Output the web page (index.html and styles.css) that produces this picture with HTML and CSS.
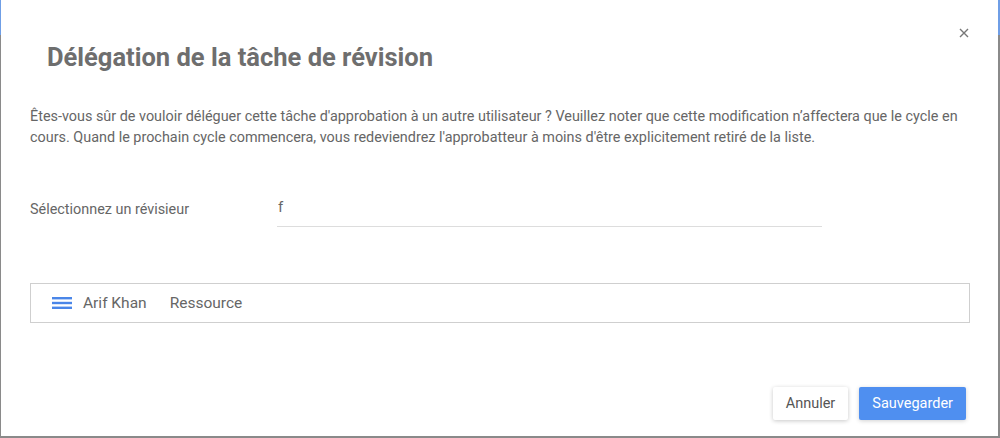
FILE: index.html
```html
<!DOCTYPE html>
<html lang="fr">
<head>
  <meta charset="UTF-8" />
  <title>Délégation de la tâche de révision</title>
  <link rel="stylesheet" href="styles.css">
</head>
<body>
  <div class="dialog">
    <div class="dialog-header">
      <h2 class="dialog-title">Délégation de la tâche de révision</h2>
      <button class="close-btn" aria-label="Fermer">
        <svg width="10" height="10" viewBox="0 0 10 10">
          <path d="M1 1 L9 9 M9 1 L1 9" stroke="#777" stroke-width="1.4" fill="none" />
        </svg>
      </button>
    </div>

    <div class="dialog-body">
      <p class="intro">
        Êtes-vous sûr de vouloir déléguer cette tâche d'approbation à un autre utilisateur ? Veuillez noter que cette modification n’affectera que le cycle en cours. Quand le prochain cycle commencera, vous redeviendrez l'approbatteur à moins d'être explicitement retiré de la liste.
      </p>

      <div class="field">
        <label class="field-label" for="reviewer">Sélectionnez un révisieur</label>
        <input class="field-input" id="reviewer" type="text" value="f" />
      </div>

      <div class="result-list">
        <div class="result-item">
          <svg class="drag-icon" width="20" height="12" viewBox="0 0 20 12">
            <rect x="0" y="0" width="20" height="2.4" fill="#4a86e8" />
            <rect x="0" y="4.8" width="20" height="2.4" fill="#4a86e8" />
            <rect x="0" y="9.6" width="20" height="2.4" fill="#4a86e8" />
          </svg>
          <span class="result-name">Arif Khan</span>
          <span class="result-type">Ressource</span>
        </div>
      </div>
    </div>

    <div class="dialog-footer">
      <button class="btn btn-cancel">Annuler</button>
      <button class="btn btn-save">Sauvegarder</button>
    </div>
  </div>
</body>
</html>
```

FILE: styles.css
```css
* {
  box-sizing: border-box;
}

body {
  margin: 0;
  font-family: Roboto, 'Liberation Sans', sans-serif;
  background: #fff;
  color: #666;
}

.dialog {
  width: 1000px;
  height: 438px;
  display: flex;
  flex-direction: column;
  border-style: solid;
  border-width: 0 2px 2px 1px;
  border-image: linear-gradient(to bottom, #6f9ee6 36px, #8a8a8a 36px) 1;
  background: #fff;
}

.dialog-header {
  display: flex;
  justify-content: space-between;
  align-items: flex-start;
  padding: 0 29px 0 46px;
}

.dialog-title {
  margin: 42px 0 0;
  font-size: 25.5px;
  line-height: 30px;
  font-weight: 700;
  color: #6e6e6e;
}

.close-btn {
  margin-top: 28px;
  padding: 0;
  border: none;
  background: none;
  cursor: pointer;
  line-height: 0;
}

.dialog-body {
  padding: 0 29px;
}

.intro {
  margin: 34px 0 0;
  font-size: 14.4px;
  line-height: 21px;
  color: #666;
}

.field {
  display: flex;
  align-items: center;
  margin-top: 43px;
}

.field-label {
  width: 247px;
  font-size: 14.4px;
  color: #666;
}

.field-input {
  width: 545px;
  height: 36px;
  padding: 0 1px 4px;
  border: none;
  border-bottom: 1px solid #ddd;
  font-family: inherit;
  font-size: 15px;
  color: #666;
  outline: none;
}

.result-list {
  margin-top: 56px;
  width: 940px;
  border: 1px solid #cfcfcf;
}

.result-item {
  display: flex;
  align-items: center;
  height: 38px;
  padding-left: 21px;
  font-size: 15.5px;
  color: #666;
}

.drag-icon {
  margin-right: 11px;
}

.result-name {
  margin-right: 23px;
}

.dialog-footer {
  margin-top: auto;
  display: flex;
  justify-content: flex-end;
  gap: 11px;
  padding: 0 32px 16px 0;
}

.btn {
  height: 33px;
  padding: 0 13px;
  border: none;
  border-radius: 2px;
  font-family: inherit;
  font-size: 14.5px;
  cursor: pointer;
}

.btn-cancel {
  background: #fff;
  color: #555;
  box-shadow: 0 1px 4px rgba(0, 0, 0, 0.22);
}

.btn-save {
  background: #4f8ff0;
  color: #fff;
  box-shadow: 0 1px 4px rgba(0, 0, 0, 0.18);
}
```
